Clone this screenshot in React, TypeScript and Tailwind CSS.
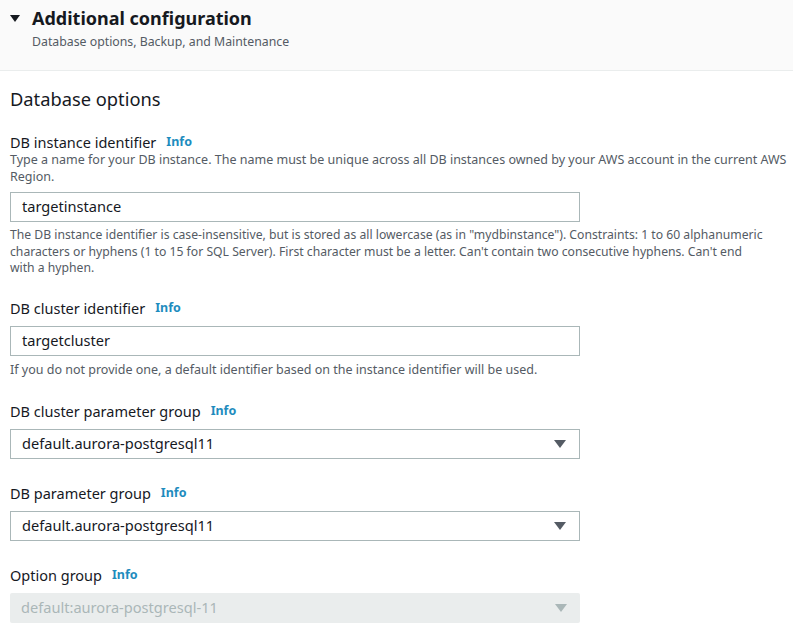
import * as React from "react";

const font = { fontFamily: '"Noto Sans", "Open Sans", sans-serif' };

function Info() {
  return (
    <span className="ml-[10px] text-[12.5px] font-bold text-[#1e8cbe]">Info</span>
  );
}

function Label({ children }: { children: React.ReactNode }) {
  return (
    <div className="flex h-[20px] items-center text-[14.5px] leading-[20px] text-[#16191f]">
      {children}
      <Info />
    </div>
  );
}

function TextInput({ value, gap = "mt-[8px]" }: { value: string; gap?: string }) {
  return (
    <div
      className={`${gap} flex h-[30px] w-[570px] items-center border border-[#aab7b8] px-[11px] text-[14.6px] text-[#16191f]`}
    >
      {value}
    </div>
  );
}

function Select({ value, disabled }: { value: string; disabled?: boolean }) {
  return (
    <div
      className={
        disabled
          ? "mt-[8px] flex h-[30px] w-[570px] items-center justify-between rounded-[2px] bg-[#eaeded] px-[11px] text-[14.6px] text-[#aab7b8]"
          : "mt-[8px] flex h-[30px] w-[570px] items-center justify-between border border-[#aab7b8] px-[11px] text-[14.6px] text-[#16191f]"
      }
    >
      <span>{value}</span>
      <svg width="12" height="8" viewBox="0 0 12 8" className="mr-[2px]">
        <path d="M0 0 L12 0 L6 8 Z" fill={disabled ? "#aab7b8" : "#545b64"} />
      </svg>
    </div>
  );
}

export default function App() {
  return (
    <div className="min-h-[644px] w-[793px] overflow-hidden bg-white" style={font}>
      <div className="h-[71px] border-b border-[#eaeded] bg-[#fafafa] pt-[7px]">
        <div className="flex h-[22px] items-center">
          <svg width="10" height="7" viewBox="0 0 10 7" className="ml-[10px] mr-[12px]">
            <path d="M0 0 L10 0 L5 7 Z" fill="#16191f" />
          </svg>
          <span className="text-[18px] font-bold leading-[22px] text-[#16191f]">
            Additional configuration
          </span>
        </div>
        <div className="ml-[32px] mt-[5px] text-[12.3px] leading-[16px] text-[#545b64]">
          Database options, Backup, and Maintenance
        </div>
      </div>

      <div className="px-[10px]">
        <div className="mt-[16px] h-[24px] text-[18.3px] leading-[24px] text-[#16191f]">
          Database options
        </div>

        <div className="mt-[21px]">
          <Label>DB instance identifier</Label>
          <div className="whitespace-nowrap text-[12.5px] leading-[16.5px] text-[#545b64]">
            Type a name for your DB instance. The name must be unique across all DB instances
            owned by your AWS account in the current AWS
            <br />
            Region.
          </div>
          <TextInput value="targetinstance" gap="mt-[7px]" />
          <div className="mt-[5px] whitespace-nowrap text-[12.2px] leading-[16.5px] text-[#545b64]">
            The DB instance identifier is case-insensitive, but is stored as all lowercase (as in
            "mydbinstance"). Constraints: 1 to 60 alphanumeric
            <br />
            characters or hyphens (1 to 15 for SQL Server). First character must be a letter.
            Can't contain two consecutive hyphens. Can't end
            <br />
            with a hyphen.
          </div>
        </div>

        <div className="mt-[21px]">
          <Label>DB cluster identifier</Label>
          <TextInput value="targetcluster" />
          <div className="mt-[6px] text-[12.5px] leading-[16px] text-[#545b64]">
            If you do not provide one, a default identifier based on the instance identifier will
            be used.
          </div>
        </div>

        <div className="mt-[23px]">
          <Label>DB cluster parameter group</Label>
          <Select value="default.aurora-postgresql11" />
        </div>

        <div className="mt-[24px]">
          <Label>DB parameter group</Label>
          <Select value="default.aurora-postgresql11" />
        </div>

        <div className="mt-[24px]">
          <Label>Option group</Label>
          <Select value="default:aurora-postgresql-11" disabled />
        </div>
      </div>
    </div>
  );
}
